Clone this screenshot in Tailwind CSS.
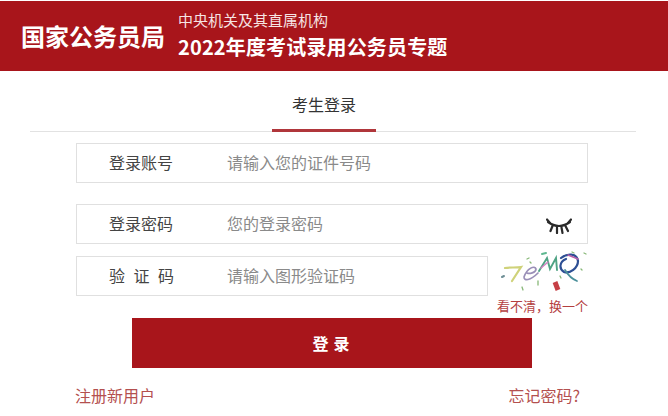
<!doctype html>
<html lang="zh-CN">
<head>
    <meta charset="UTF-8">
    <meta name="viewport" content="width=device-width, initial-scale=1.0">
    <script src="https://cdn.jsdelivr.net/npm/@tailwindcss/browser@4"></script>
    <title>考生登录</title>
</head>
<body class="bg-white h-[416px] w-[668px] overflow-hidden font-['Noto_Sans_CJK_SC','Liberation_Sans',sans-serif]">
<header class="mt-px h-[70px] bg-[#a8151b] text-white flex items-center pl-[21px]">
    <h1 class="text-[24px] leading-none font-bold w-[158px] shrink-0 whitespace-nowrap">国家公务员局</h1>
    <div class="flex flex-col -ml-px">
        <div class="text-[15px] leading-[20px] mt-[-2px] text-[#f6e4e4] whitespace-nowrap">中央机关及其直属机构</div>
        <div class="text-[20px] leading-[28px] font-bold mt-[3px] tracking-[0.15px] whitespace-nowrap">2022年度考试录用公务员专题</div>
    </div>
</header>
<main>
    <div class="mx-[30px] w-[606px] h-[61px] border-b border-[#e2e2e2] flex justify-center">
        <div class="w-[104px] h-[61px] ml-[-18px] border-b-[3px] border-[#b0363b] text-center text-[16px] leading-[66px] text-[#333]">考生登录</div>
    </div>
    <form class="ml-[76px] w-[512px] mt-[11px]">
        <div class="h-[40px] pb-[3px] border border-[#e0e0e0] flex items-center text-[16px] leading-none">
            <span class="w-[150px] pl-[32px] text-[#444]">登录账号</span>
            <span class="text-[#8a8a8a]">请输入您的证件号码</span>
        </div>
        <div class="h-[40px] pb-[3px] mt-[21px] border border-[#e0e0e0] flex items-center text-[16px] leading-none relative">
            <span class="w-[150px] pl-[32px] text-[#444]">登录密码</span>
            <span class="text-[#8a8a8a]">您的登录密码</span>
            <svg class="absolute right-[15px] top-[13px]" width="26" height="16" viewBox="0 0 26 16" fill="none" stroke="#2b2b2b" stroke-width="2.200" stroke-linecap="round">
                <path d="M2 4Q13 12 24 4"/>
                <path d="M1 1.500L4 5M25 1.500L22 5M6.500 8L4.500 13M11 9.500V15M15.500 9.500L16.500 15M19.500 8L22 13"/>
            </svg>
        </div>
        <div class="flex mt-[12px] items-start h-[62px]">
            <div class="w-[412px] h-[40px] pb-[3px] border border-[#e0e0e0] flex items-center text-[16px] leading-none shrink-0">
                <span class="w-[150px] pl-[32px] text-[#444] tracking-[8.500px]">验证码</span>
                <span class="text-[#8a8a8a]">请输入图形验证码</span>
            </div>
            <div class="ml-[8px] flex flex-col items-start">
                <svg class="mt-[-8px]" width="96" height="48" viewBox="0 0 96 48" fill="none" stroke-linecap="round">
                    <path d="M9 20C14 19 20 20 25 19L16 33" stroke="#cfd27a" stroke-width="2.200"/>
                    <path d="M6 29L8 28" stroke="#6f8f96" stroke-width="2"/>
                    <path d="M28 29C31 20 39 17 40 21C40 25 33 26 31 25M28 29C28 33 34 33 42 25" stroke="#9a8fb8" stroke-width="1.700"/>
                    <path d="M43 23L51 10L54 21L60 10L61 22" stroke="#4fa384" stroke-width="1.900"/>
                    <path d="M52 14L45 20" stroke="#d080c0" stroke-width="1.500"/>
                    <path d="M46 6L50 5" stroke="#5fb890" stroke-width="2"/>
                    <path d="M65 10C71 5 81 5 82 13C82 20 74 26 68 24C63 21 63 14 70 11" stroke="#2d4f94" stroke-width="2.200"/>
                    <path d="M69 22C72 27 76 31 81 33" stroke="#4a8f9a" stroke-width="1.800"/>
                    <path d="M72 7L82 11" stroke="#b860a8" stroke-width="1.500"/>
                    <path d="M59 34L62 42" stroke="#c63f45" stroke-width="5" stroke-linecap="butt"/>
                    <path d="M31 11L33 10M76 4L78 5M88 5L90 6M85 21L86 22M26 39L27 42M42 33L42 37M34 14L35 15M64 28L65 30" stroke="#88b878" stroke-width="1.300"/>
                </svg>
                <span class="mt-[2px] ml-[1px] text-[13px] leading-[16px] text-[#b4403f] whitespace-nowrap">看不清，换一个</span>
            </div>
        </div>
        <button type="button" class="block ml-[56px] w-[400px] h-[50px] pl-[3px] bg-[#a8151b] text-white text-[16px] font-bold tracking-[5px]">登录</button>
        <div class="flex justify-between -ml-px mt-[17px] text-[16px] leading-[20px] text-[#b4504f] w-[505px]">
            <a href="#">注册新用户</a>
            <a href="#">忘记密码?</a>
        </div>
    </form>
</main>
</body>
</html>
